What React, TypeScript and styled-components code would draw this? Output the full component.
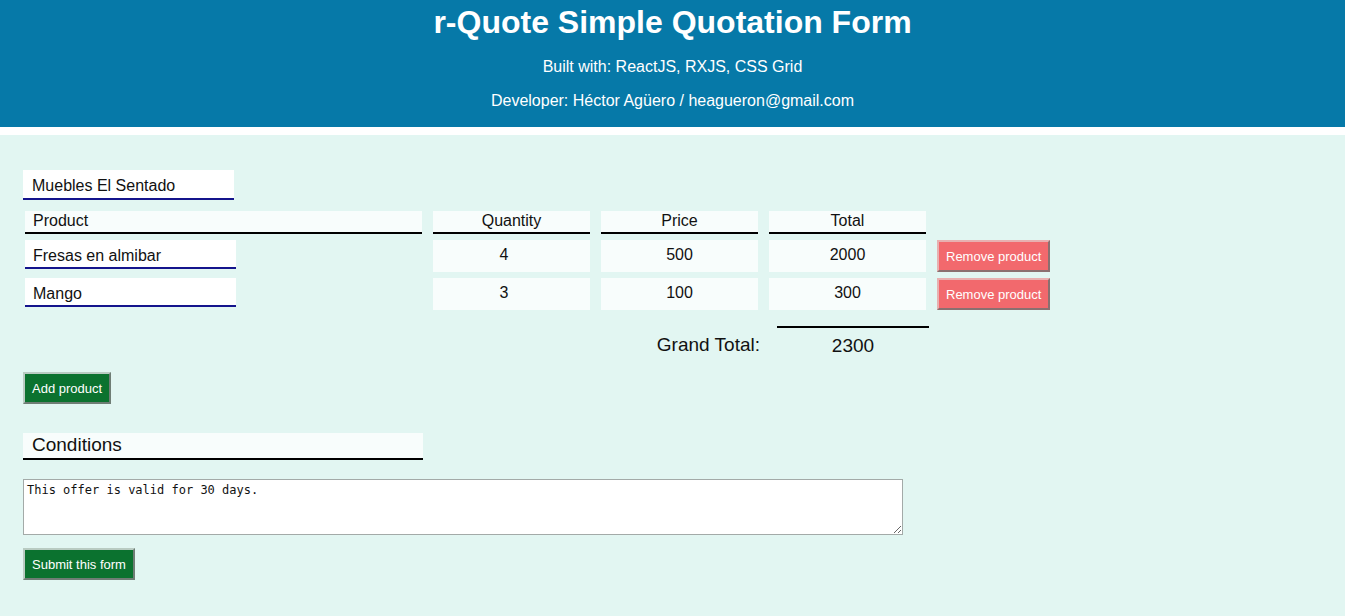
import React from "react";
import styled, { createGlobalStyle } from "styled-components";

const Global = createGlobalStyle`
  html, body { margin: 0; padding: 0; }
  body {
    font-family: "Liberation Sans", Arial, sans-serif;
    background: #e2f6f2;
    color: #111;
  }
  * { box-sizing: border-box; }
`;

const Header = styled.header`
  background: #0679a8;
  color: #fff;
  text-align: center;
  padding-top: 4px;
  padding-bottom: 17px;
  border-bottom: 8px solid #ffffff;
`;

const Title = styled.h1`
  margin: 0;
  font-size: 32px;
  line-height: 37px;
  font-weight: bold;
`;

const Sub = styled.p`
  margin: 17px 0 0;
  font-size: 16px;
  line-height: 18px;
  & + & { margin-top: 16px; }
`;

const Main = styled.main`
  padding: 35px 23px 36px;
  display: flex;
  flex-direction: column;
  align-items: flex-start;
`;

const LineInput = styled.input<{ $w: number; $h: number; $pad: number; $top: number }>`
  width: ${(p) => p.$w}px;
  height: ${(p) => p.$h}px;
  padding: ${(p) => p.$top}px 0 0 ${(p) => p.$pad}px;
  border: none;
  border-bottom: 2px solid #14148c;
  background: #ffffff;
  font: 16px "Liberation Sans", Arial, sans-serif;
  color: #111;
  outline: none;
`;

const Grid = styled.div`
  display: grid;
  grid-template-columns: 397px 157px 157px 157px auto;
  column-gap: 11px;
  row-gap: 6px;
  margin: 11px 0 0 2px;
  align-items: start;
`;

const HeadCell = styled.div<{ $center?: boolean }>`
  height: 23px;
  background: #f8fdfc;
  border-bottom: 2px solid #000;
  font-size: 16px;
  line-height: 19px;
  padding-left: ${(p) => (p.$center ? 0 : 8)}px;
  text-align: ${(p) => (p.$center ? "center" : "left")};
`;

const NumCell = styled.div<{ $shift?: number }>`
  height: 32px;
  background: #f8fdfc;
  font-size: 16px;
  line-height: 29px;
  text-align: center;
  padding-right: ${(p) => p.$shift ?? 0}px;
`;

const Button = styled.button<{ $tone: "green" | "red" }>`
  height: 32px;
  padding: 0 7px;
  font: 13px "Liberation Sans", Arial, sans-serif;
  color: #fff;
  background: ${(p) => (p.$tone === "green" ? "#0b722f" : "#f2696d")};
  border: 2px solid;
  border-color: ${(p) =>
    p.$tone === "green"
      ? "#b9cbc2 #6f7d75 #6f7d75 #b9cbc2"
      : "#e8b0b0 #8a7070 #8a7070 #e8b0b0"};
  cursor: pointer;
  white-space: nowrap;
`;

const GrandRow = styled.div`
  display: grid;
  grid-template-columns: 397px 157px 157px 157px;
  column-gap: 11px;
  margin: 16px 0 0 2px;
`;

const GrandLabel = styled.div`
  grid-column: 1 / 4;
  text-align: right;
  margin-right: -2px;
  padding-top: 8px;
  font-size: 19px;
  line-height: 22px;
`;

const GrandValue = styled.div`
  grid-column: 4;
  width: 152px;
  margin-left: 8px;
  border-top: 2px solid #000;
  padding-top: 7px;
  text-align: center;
  font-size: 19px;
  line-height: 22px;
`;

const Spacer = styled.div<{ $h: number }>`
  height: ${(p) => p.$h}px;
`;

const SectionHead = styled.div`
  width: 400px;
  height: 27px;
  background: #f8fdfc;
  border-bottom: 2px solid #000;
  padding-left: 9px;
  font-size: 19px;
  line-height: 23px;
`;

const Area = styled.textarea`
  width: 880px;
  height: 56px;
  border: 1px solid #a3aaa8;
  background: #fff;
  padding: 3px 3px 2px;
  font: 12px "DejaVu Sans Mono", "Liberation Mono", monospace;
  color: #111;
  outline: none;
`;

const products = [
  { name: "Fresas en almibar", qty: 4, price: 500 },
  { name: "Mango", qty: 3, price: 100 },
];

export default function App() {
  const grand = products.reduce((s, p) => s + p.qty * p.price, 0);
  return (
    <>
      <Global />
      <Header>
        <Title>r-Quote Simple Quotation Form</Title>
        <Sub>Built with: ReactJS, RXJS, CSS Grid</Sub>
        <Sub>Developer: Héctor Agüero / heagueron@gmail.com</Sub>
      </Header>
      <Main>
        <LineInput $w={211} $h={30} $pad={9} $top={4} defaultValue="Muebles El Sentado" />
        <Grid>
          <HeadCell>Product</HeadCell>
          <HeadCell $center>Quantity</HeadCell>
          <HeadCell $center>Price</HeadCell>
          <HeadCell $center>Total</HeadCell>
          <div />
          {products.map((p) => (
            <React.Fragment key={p.name}>
              <LineInput $w={211} $h={29} $pad={8} $top={5} defaultValue={p.name} />
              <NumCell $shift={15}>{p.qty}</NumCell>
              <NumCell>{p.price}</NumCell>
              <NumCell>{p.qty * p.price}</NumCell>
              <Button $tone="red">Remove product</Button>
            </React.Fragment>
          ))}
        </Grid>
        <GrandRow>
          <GrandLabel>Grand Total:</GrandLabel>
          <GrandValue>{grand}</GrandValue>
        </GrandRow>
        <Spacer $h={15} />
        <Button $tone="green">Add product</Button>
        <Spacer $h={29} />
        <SectionHead>Conditions</SectionHead>
        <Spacer $h={19} />
        <Area defaultValue="This offer is valid for 30 days." />
        <Spacer $h={13} />
        <Button $tone="green">Submit this form</Button>
      </Main>
    </>
  );
}
